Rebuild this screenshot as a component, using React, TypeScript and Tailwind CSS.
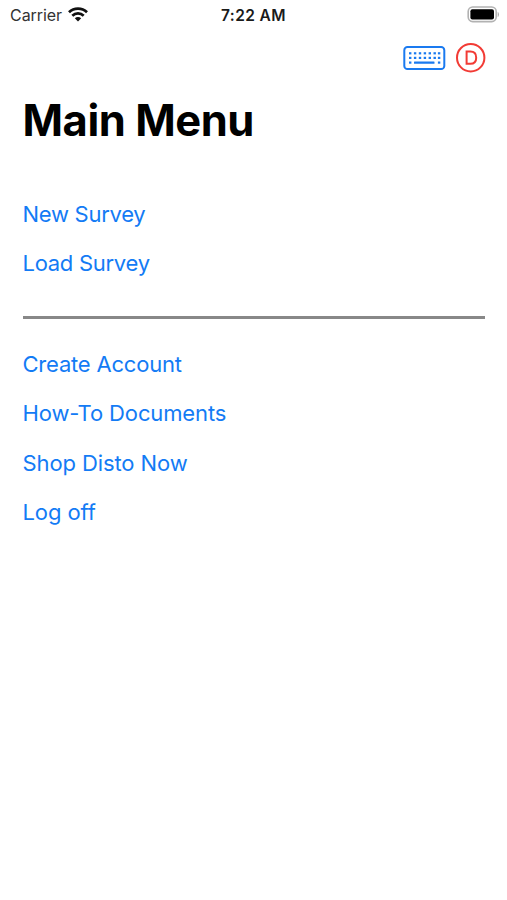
const KEY_COLUMNS = [6.5, 11.4, 16.3, 21.2, 26.1, 31, 35.4];

function WifiIcon() {
  return (
    <svg width="20" height="15" viewBox="0 0 20 15" className="ml-[6px]" aria-hidden="true">
      <g fill="none" stroke="#111" strokeWidth="2.7">
        <path d="M1 5.2C6 .3 14 .3 19 5.2" />
        <path d="M4.3 8.7c3.2-3.1 8.2-3.1 11.4 0" />
      </g>
      <path d="M10 14.4 6.8 11.3c1.8-1.6 4.6-1.6 6.4 0z" fill="#111" />
    </svg>
  );
}

function BatteryIcon() {
  return (
    <svg width="33" height="17" viewBox="0 0 33 17" aria-hidden="true">
      <rect x="1.2" y="1" width="28" height="14.6" rx="4.5" fill="#fff" stroke="#b2b2b2" strokeWidth="1.6" />
      <rect x="3.4" y="3.2" width="23.6" height="10.2" rx="2" fill="#000" />
      <path d="M30.7 6c1.7.5 1.7 4.5 0 5z" fill="#aaa" />
    </svg>
  );
}

function KeyboardIcon() {
  return (
    <svg width="43" height="25" viewBox="0 0 43 25" aria-hidden="true">
      <rect x="1.3" y="1.1" width="40" height="22" rx="3.2" fill="none" stroke="#1a7af0" strokeWidth="2" />
      <g fill="#1a7af0">
        {KEY_COLUMNS.map((x) => (
          <g key={x}>
            <rect x={x - 0.5} y="6.2" width="2.4" height="2.2" />
            <rect x={x - 0.5} y="10.8" width="2.4" height="2.2" />
          </g>
        ))}
        <rect x="6" y="15.5" width="2.4" height="2.2" />
        <rect x="11" y="15.5" width="20.5" height="2.2" rx=".5" />
        <rect x="34.9" y="15.5" width="2.4" height="2.2" />
      </g>
    </svg>
  );
}

function DistoIcon() {
  return (
    <svg width="30" height="30" viewBox="0 0 30 30" fill="none" stroke="#f23b35" strokeWidth="2" aria-label="D">
      <circle cx="14.7" cy="14.7" r="13.7" />
      <path d="M10.6 8.6h3.7c3.8 0 5.9 2.3 5.9 6.1s-2.1 6.1-5.9 6.1h-3.7z" />
    </svg>
  );
}

function MenuLink({ label, spacing }: { label: string; spacing: string }) {
  return (
    <button type="button" className="flex h-[49.25px] items-center text-left text-[22px] text-[#137bf5]">
      <span className={spacing}>{label}</span>
    </button>
  );
}

export default function App() {
  return (
    <main className="h-[900px] w-full overflow-hidden bg-white font-['Inter',sans-serif]">
      <header className="grid h-[29px] grid-cols-3 items-center pl-[10px] pr-[7px]">
        <div className="flex items-center text-[16px] text-[#333]">
          <span className="tracking-[-0.06px]">Carrier</span>
          <WifiIcon />
        </div>
        <span className="pr-[3px] pt-[2px] text-center text-[15.5px] font-semibold tracking-[0.4px] text-[#1a1a1a]">7:22 AM</span>
        <div className="flex justify-end">
          <BatteryIcon />
        </div>
      </header>
      <div className="flex h-[58px] items-center justify-end gap-[10px] pr-[21px]">
        <KeyboardIcon />
        <DistoIcon />
      </div>
      <h1 className="ml-[22.5px] flex h-[66px] items-center pt-[2px] text-[43.5px] font-bold text-black">
        <span className="tracking-[-0.45px]">Main Menu</span>
      </h1>
      <nav className="ml-[22.5px] mr-[22px] pt-[36.9px]">
        <div className="flex flex-col">
          <MenuLink label="New Survey" spacing="tracking-[-0.28px]" />
          <MenuLink label="Load Survey" spacing="tracking-[-0.28px]" />
        </div>
        <hr className="mb-[21.2px] mt-[27.4px] h-[3px] border-0 bg-[#888]" />
        <div className="flex flex-col">
          <MenuLink label="Create Account" spacing="tracking-[-0.2px]" />
          <MenuLink label="How-To Documents" spacing="tracking-[-0.13px]" />
          <MenuLink label="Shop Disto Now" spacing="tracking-[-0.1px]" />
          <MenuLink label="Log off" spacing="tracking-[-0.1px]" />
        </div>
      </nav>
    </main>
  );
}
